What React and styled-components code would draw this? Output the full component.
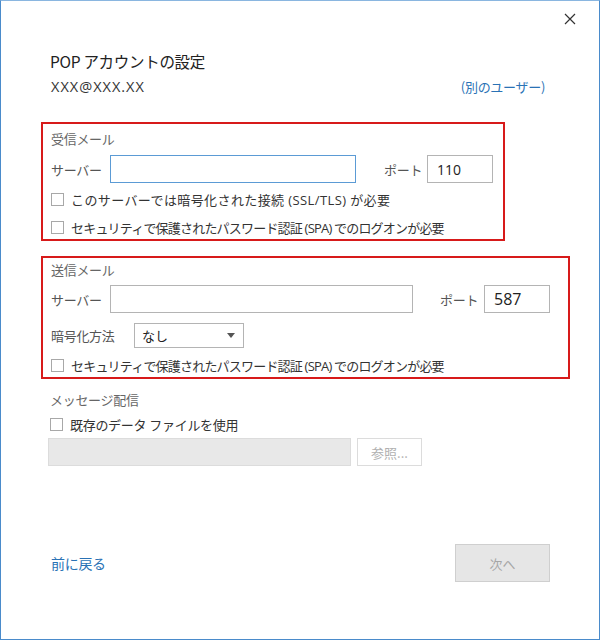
import React from "react";
import styled, { createGlobalStyle } from "styled-components";

const GlobalStyle = createGlobalStyle`
  html, body {
    margin: 0;
    padding: 0;
    background: #ffffff;
  }
  body {
    font-family: "Noto Sans CJK JP", "Noto Sans", sans-serif;
  }
`;

const Window = styled.div`
  width: 600px;
  height: 640px;
  box-sizing: border-box;
  border: 1px solid #4a8bcb;
  border-top-color: #8ab6e0;
  background: #ffffff;
  display: flex;
  flex-direction: column;
  padding: 0 0 57px 40px;
  color: #333;
  font-size: 13px;
`;

const TopBar = styled.div`
  height: 36px;
  display: flex;
  justify-content: flex-end;
  align-items: center;
  padding-right: 22px;
`;

const CloseButton = styled.button`
  border: none;
  background: transparent;
  padding: 0;
  width: 14px;
  height: 14px;
  display: flex;
  align-items: center;
  justify-content: center;
  cursor: pointer;
`;

const Title = styled.div`
  margin-top: 14px;
  padding-left: 9px;
  height: 20px;
  line-height: 20px;
  font-size: 15.5px;
  color: #222;
  letter-spacing: -0.3px;
`;

const AccountRow = styled.div`
  margin-top: 5px;
  height: 20px;
  display: flex;
  justify-content: space-between;
  align-items: center;
  padding: 0 54px 0 10px;
`;

const Email = styled.span`
  font-family: "Open Sans", "Noto Sans", sans-serif;
  font-size: 14.5px;
  letter-spacing: 1px;
  color: #333;
`;

const Link = styled.a`
  color: #2a72b5;
  font-size: ${(p) => p.$size || 13}px;
  text-decoration: none;
  cursor: pointer;
  letter-spacing: -0.3px;
`;

const Group = styled.section`
  width: ${(p) => p.$width}px;
  box-sizing: border-box;
  border: 2px solid #d71a1a;
  padding: ${(p) => p.$padTop}px ${(p) => p.$padRight}px ${(p) => p.$padBottom}px 8px;
  margin-top: ${(p) => p.$top}px;
  display: flex;
  flex-direction: column;
`;

const GroupTitle = styled.div`
  height: 20px;
  line-height: 20px;
  color: #666;
  letter-spacing: -0.3px;
`;

const FieldRow = styled.div`
  display: flex;
  align-items: center;
  height: ${(p) => p.$height || 28}px;
  margin-top: ${(p) => p.$top || 0}px;
`;

const FieldLabel = styled.label`
  width: ${(p) => p.$width}px;
  flex: none;
  color: #555;
  margin-left: ${(p) => p.$left || 0}px;
  white-space: nowrap;
  letter-spacing: -0.3px;
`;

const TextInput = styled.div`
  width: ${(p) => p.$width}px;
  height: 28px;
  box-sizing: border-box;
  border: 1px solid ${(p) => (p.$focused ? "#5b9bd5" : "#b4b4b4")};
  background: #fff;
  flex: none;
  display: flex;
  align-items: center;
  padding-left: 9px;
  font-family: "Open Sans", "Noto Sans", sans-serif;
  font-size: ${(p) => p.$fontSize || 14}px;
  color: #222;
`;

const Select = styled.div`
  width: 110px;
  height: 25px;
  box-sizing: border-box;
  border: 1px solid #b4b4b4;
  display: flex;
  align-items: center;
  justify-content: space-between;
  padding: 0 8px 0 7px;
  color: #222;
`;

const Arrow = styled.span`
  width: 0;
  height: 0;
  border-left: 4px solid transparent;
  border-right: 4px solid transparent;
  border-top: 5px solid #555;
`;

const CheckRow = styled.label`
  display: flex;
  align-items: center;
  height: 24px;
  margin-top: ${(p) => p.$top || 0}px;
  color: #333;
  white-space: pre;
  cursor: pointer;
  letter-spacing: ${(p) => p.$tracking || 0}px;
  font-family: "Open Sans", "Noto Sans CJK JP", sans-serif;
`;

const Box = styled.span`
  width: 13px;
  height: 13px;
  box-sizing: border-box;
  border: 1px solid #a8a8a8;
  background: #fff;
  margin-right: 7px;
  flex: none;
`;

const Delivery = styled.section`
  margin-top: 11px;
  padding-left: 9px;
  display: flex;
  flex-direction: column;
`;

const FileRow = styled.div`
  display: flex;
  margin-top: 2px;
  margin-left: -2px;
  gap: 6px;
`;

const DisabledInput = styled.div`
  width: 303px;
  height: 28px;
  box-sizing: border-box;
  border: 1px solid #dcdcdc;
  background: #e8e8e8;
`;

const GhostButton = styled.button`
  width: 65px;
  height: 28px;
  box-sizing: border-box;
  border: 1px solid #dcdcdc;
  background: #fff;
  color: #b0b0b0;
  font-family: inherit;
  font-size: 13px;
  padding: 0;
`;

const Footer = styled.div`
  margin-top: auto;
  display: flex;
  justify-content: space-between;
  align-items: center;
  padding: 0 49px 0 10px;
`;

const NextButton = styled.button`
  width: 95px;
  height: 38px;
  box-sizing: border-box;
  border: 1px solid #cfcfcf;
  background: #e6e6e6;
  color: #a6a6a6;
  font-family: inherit;
  font-size: 13px;
  padding: 0;
`;

const Check = ({ children, top, tracking }) => (
  <CheckRow $top={top} $tracking={tracking}>
    <Box />
    {children}
  </CheckRow>
);

export default function App() {
  return (
    <>
      <GlobalStyle />
      <Window>
        <TopBar>
          <CloseButton aria-label="閉じる">
            <svg width="12" height="12" viewBox="0 0 12 12">
              <path d="M1 1L11 11M11 1L1 11" stroke="#333" strokeWidth="1.2" fill="none" />
            </svg>
          </CloseButton>
        </TopBar>

        <Title>POP アカウントの設定</Title>
        <AccountRow>
          <Email>XXX@XXX.XX</Email>
          <Link>(別のユーザー)</Link>
        </AccountRow>

        <Group $width={464} $top={26} $padTop={5} $padRight={10} $padBottom={0}>
          <GroupTitle>受信メール</GroupTitle>
          <FieldRow $top={6}>
            <FieldLabel $width={59}>サーバー</FieldLabel>
            <TextInput $width={246} $focused />
            <FieldLabel $width={43} $left={28}>ポート</FieldLabel>
            <TextInput $width={66}>110</TextInput>
          </FieldRow>
          <Check top={4} tracking={0.4}>このサーバーでは暗号化された接続 (SSL/TLS) が必要</Check>
          <Check top={4} tracking={-0.8}>セキュリティで保護されたパスワード認証 (SPA) でのログオンが必要</Check>
        </Group>

        <Group $width={529} $top={15} $padTop={2} $padRight={18} $padBottom={0}>
          <GroupTitle>送信メール</GroupTitle>
          <FieldRow $top={5}>
            <FieldLabel $width={59}>サーバー</FieldLabel>
            <TextInput $width={303} />
            <FieldLabel $width={44} $left={27}>ポート</FieldLabel>
            <TextInput $width={66} $fontSize={16}>587</TextInput>
          </FieldRow>
          <FieldRow $top={10} $height={25}>
            <FieldLabel $width={83}>暗号化方法</FieldLabel>
            <Select>
              なし
              <Arrow />
            </Select>
          </FieldRow>
          <Check top={5} tracking={-0.8}>セキュリティで保護されたパスワード認証 (SPA) でのログオンが必要</Check>
        </Group>

        <Delivery>
          <GroupTitle>メッセージ配信</GroupTitle>
          <Check top={2} tracking={-0.3}>既存のデータ ファイルを使用</Check>
          <FileRow>
            <DisabledInput />
            <GhostButton disabled>参照...</GhostButton>
          </FileRow>
        </Delivery>

        <Footer>
          <Link $size={14}>前に戻る</Link>
          <NextButton disabled>次へ</NextButton>
        </Footer>
      </Window>
    </>
  );
}
